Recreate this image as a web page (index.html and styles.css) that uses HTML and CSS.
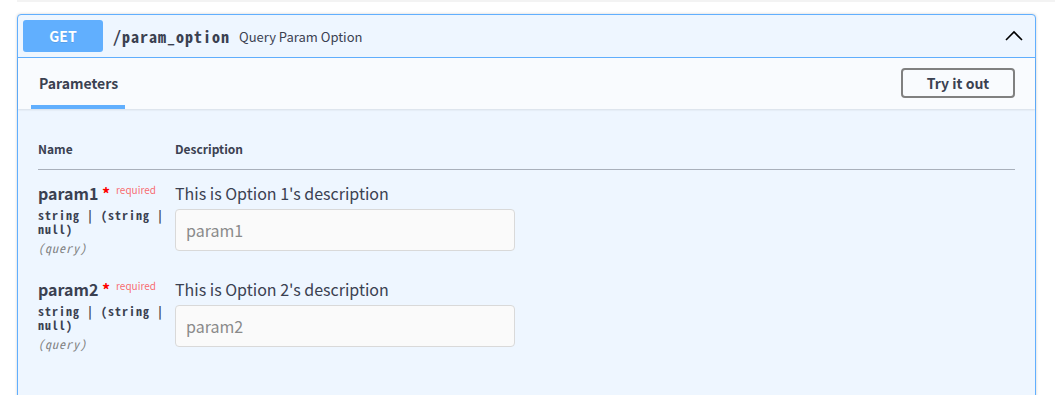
FILE: index.html
```html
<!DOCTYPE html>
<html>
<head>
	<meta charset="UTF-8">
	<title>param_option</title>
	<link rel="stylesheet" href="styles.css">
</head>

<body>
	<div class="wrapper">
		<div class="prev-block"></div>

		<div class="opblock">
			<div class="summary">
				<span class="method">GET</span>
				<span class="path">/param_option</span>
				<span class="summary-desc">Query Param Option</span>
				<svg class="arrow" width="20" height="20" viewBox="0 0 20 20">
					<path d="M2 14 L10 6 L18 14" fill="none" stroke="#000" stroke-width="1.6"/>
				</svg>
			</div>

			<div class="section-header">
				<div class="tab">Parameters</div>
				<button class="try-out">Try it out</button>
			</div>

			<div class="params">
				<div class="param-grid head">
					<div>Name</div>
					<div>Description</div>
				</div>

				<div class="param-grid row">
					<div class="col-name">
						<div class="param-name">param1<span class="star">&nbsp;*</span><span class="req">required</span></div>
						<div class="param-type">string | (string | null)</div>
						<div class="param-in">(query)</div>
					</div>
					<div class="col-desc">
						<div class="desc-text">This is Option 1's description</div>
						<input class="param-input" type="text" placeholder="param1">
					</div>
				</div>

				<div class="param-grid row">
					<div class="col-name">
						<div class="param-name">param2<span class="star">&nbsp;*</span><span class="req">required</span></div>
						<div class="param-type">string | (string | null)</div>
						<div class="param-in">(query)</div>
					</div>
					<div class="col-desc">
						<div class="desc-text">This is Option 2's description</div>
						<input class="param-input" type="text" placeholder="param2">
					</div>
				</div>
			</div>
		</div>
	</div>
</body>
</html>
```

FILE: styles.css
```css
*
{
	margin: 0px;
	padding: 0px;
	box-sizing: border-box;
}
body
{
	background: #ffffff;
	font-family: "Noto Sans CJK JP", "Noto Sans", sans-serif;
	color: #3b4151;
}
.wrapper
{
	padding: 0 19px 0 17px;
}
.prev-block
{
	height: 2px;
	margin-right: -19px;
	background: #f3f3f3;
	margin-bottom: 12px;
}
.opblock
{
	height: 400px;
	border: 1px solid #61affe;
	border-radius: 4px;
	background: #eef6ff;
	box-shadow: 0 0 3px rgba(0,0,0,0.19);
}
.summary
{
	display: flex;
	align-items: center;
	height: 43px;
	padding: 0 5px;
	border-bottom: 1px solid #61affe;
}
.method
{
	width: 80px;
	height: 32px;
	line-height: 32px;
	text-align: center;
	background: #61affe;
	color: #ffffff;
	font-size: 14px;
	font-weight: 700;
	border-radius: 3px;
	text-shadow: 0 1px 0 rgba(0,0,0,0.1);
}
.path
{
	margin-left: 10px;
	font-family: "Noto Sans Mono CJK JP", "DejaVu Sans Mono", monospace;
	font-size: 16px;
	font-weight: 600;
	letter-spacing: 1px;
	color: #3b4151;
}
.summary-desc
{
	margin-left: 9px;
	font-size: 13px;
	color: #3b4151;
}
.arrow
{
	margin-left: auto;
	margin-right: 6px;
}
.section-header
{
	display: flex;
	align-items: center;
	justify-content: space-between;
	height: 51px;
	padding: 0 20px 0 13px;
	background: #f9fbfe;
	box-shadow: 0 1px 2px rgba(0,0,0,0.1);
}
.tab
{
	align-self: stretch;
	display: flex;
	align-items: center;
	padding: 2px 8px 0 8px;
	width: 94px;
	font-size: 14px;
	font-weight: 700;
	color: #3b4151;
	border-bottom: 4px solid #61affe;
}
.try-out
{
	width: 114px;
	height: 30px;
	margin-top: -1px;
	background: transparent;
	border: 2px solid #808080;
	border-radius: 4px;
	font-family: inherit;
	font-size: 14px;
	font-weight: 700;
	color: #3b4151;
}
.params
{
	padding: 31px 20px 0 20px;
}
.param-grid
{
	display: grid;
	grid-template-columns: 137px 1fr;
}
.head
{
	font-size: 12px;
	font-weight: 700;
	padding-bottom: 12px;
	border-bottom: 1px solid #a9b0bb;
}
.row
{
	padding-top: 12px;
	height: 96px;
}
.param-name
{
	font-size: 16px;
	font-weight: 700;
	line-height: 22px;
}
.star
{
	color: #ff0000;
}
.req
{
	font-size: 10px;
	font-weight: 400;
	color: rgba(255,0,0,0.6);
	margin-left: 6px;
	position: relative;
	top: -6px;
}
.param-type
{
	font-family: "Noto Sans Mono CJK JP", "DejaVu Sans Mono", monospace;
	font-size: 12px;
	font-weight: 600;
	letter-spacing: 1px;
	line-height: 14px;
	padding-top: 1px;
	padding-right: 4px;
}
.param-in
{
	font-family: "Noto Sans Mono CJK JP", "DejaVu Sans Mono", monospace;
	font-size: 12px;
	font-style: italic;
	letter-spacing: 1px;
	color: #808080;
	line-height: 14px;
	margin-top: 5px;
}
.desc-text
{
	font-size: 16px;
	line-height: 22px;
}
.param-input
{
	display: block;
	width: 340px;
	height: 42px;
	margin-top: 5px;
	padding: 0 10px;
	background: #fafafa;
	border: 1px solid #d9d9d9;
	border-radius: 4px;
	font-family: inherit;
	font-size: 16px;
	color: #3b4151;
}
.param-input::placeholder
{
	color: #8a8a8a;
}
```
